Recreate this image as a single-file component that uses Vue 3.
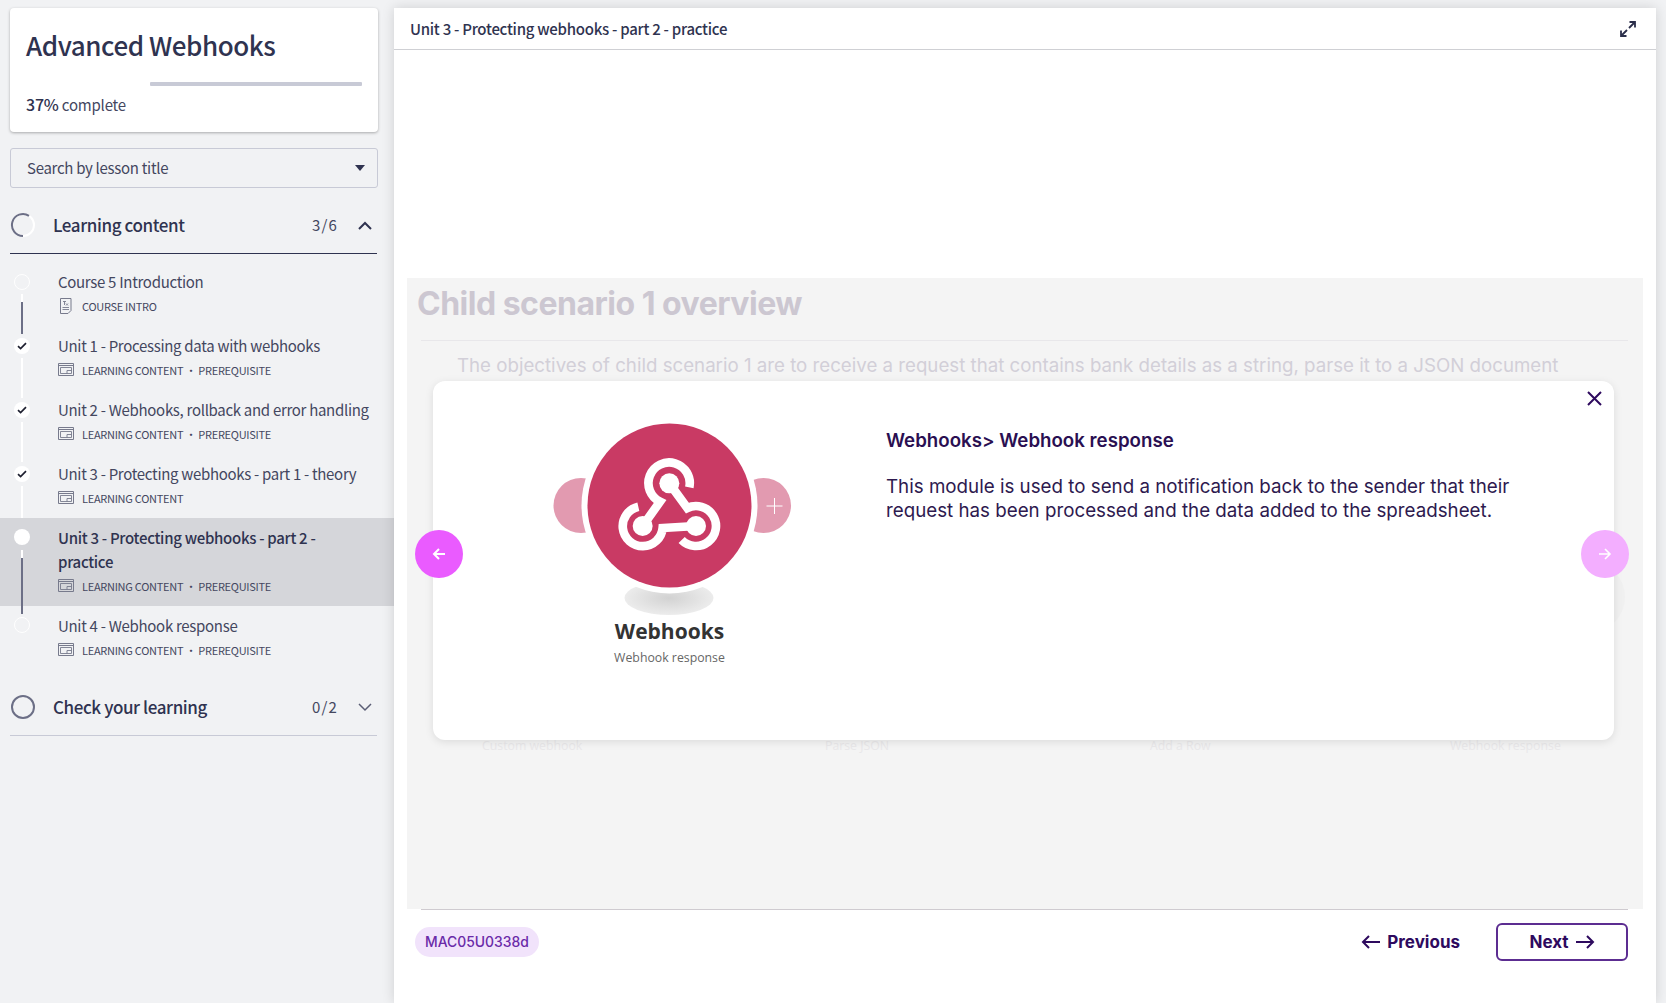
<template>
  <div class="page">
    <aside class="sidebar">
      <div class="course-card">
        <h1>Advanced Webhooks</h1>
        <div class="progress-track"></div>
        <p class="progress-text"><span>37%</span> complete</p>
      </div>

      <div class="search">
        <span>Search by lesson title</span>
        <i class="caret"></i>
      </div>

      <div class="section-head open">
        <svg class="ring" width="26" height="26" viewBox="0 0 26 26">
          <circle cx="13" cy="13" r="11" fill="none" stroke="#fff" stroke-width="2" />
          <path d="M19 3.8A11 11 0 1 0 13 24" fill="none" stroke="#6c6f86" stroke-width="2" />
        </svg>
        <span class="section-title">Learning content</span>
        <span class="count">3/6</span>
        <svg class="chev" width="14" height="9" viewBox="0 0 14 9"><path d="M1 8l6-6 6 6" fill="none" stroke="#2f3350" stroke-width="2" /></svg>
      </div>

      <ul class="lessons">
        <li
          v-for="lesson in lessons"
          :key="lesson.title"
          class="lesson"
          :class="{ active: lesson.active, last: lesson.last }"
        >
          <span class="dot" :class="{ hollow: lesson.hollow }">
            <svg v-if="lesson.done" width="10" height="8" viewBox="0 0 10 8"><path d="M1 4.2l2.6 2.4L9 1.2" fill="none" stroke="#1e2030" stroke-width="1.7" /></svg>
          </span>
          <span v-if="!lesson.last" class="line" :class="{ dark: lesson.dark }"></span>
          <div class="lesson-title">{{ lesson.title }}</div>
          <div class="lesson-meta">
            <svg v-if="lesson.intro" class="meta-icon" width="16" height="18" viewBox="0 0 16 18">
              <path d="M2.5 1.5h10.500v12l-3 3h-7.500z" fill="none" stroke="#777a8c" />
              <path d="M5 4.500h3M6.500 4.500v3.500M8 6.500l2 2M10 6.500l-2 2M4.500 10.500h6.500M4.500 12.500h6.500" fill="none" stroke="#777a8c" stroke-width=".9" />
            </svg>
            <svg v-else class="meta-icon" width="16" height="13" viewBox="0 0 16 13">
              <path d="M.5.500h15v12h-15zM.5 2.500h15" fill="none" stroke="#777a8c" />
              <path d="M2.500 4.500h11v6h-11zM9 10.500v-3h4.500" fill="none" stroke="#777a8c" stroke-width=".9" />
            </svg>
            <span>{{ lesson.kind }}</span>
          </div>
        </li>
      </ul>

      <div class="section-head">
        <svg class="ring" width="26" height="26" viewBox="0 0 26 26">
          <circle cx="13" cy="13" r="11" fill="none" stroke="#6c6f86" stroke-width="2" />
        </svg>
        <span class="section-title">Check your learning</span>
        <span class="count">0/2</span>
        <svg class="chev" width="14" height="9" viewBox="0 0 14 9"><path d="M1 1l6 6 6-6" fill="none" stroke="#5b5e75" stroke-width="1.500" /></svg>
      </div>
    </aside>

    <main class="panel">
      <header class="panel-head">
        <span>Unit 3 - Protecting webhooks - part 2 - practice</span>
        <svg width="16" height="16" viewBox="0 0 16 16">
          <path d="M9.500 1h5.500v5.500M15 1L9 7M6.500 15H1V9.500M1 15l6-6" fill="none" stroke="#2b2e4a" stroke-width="1.800" />
        </svg>
      </header>

      <section class="stage">
        <h2 class="ghost-title">Child scenario 1 overview</h2>
        <p class="ghost-text">The objectives of child scenario 1 are to receive a request that contains bank details as a string, parse it to a JSON document</p>
        <div class="ghost-labels">
          <span>Custom webhook</span>
          <span>Parse JSON</span>
          <span>Add a Row</span>
          <span>Webhook response</span>
        </div>
        <div class="ghost-circle"></div>

        <div class="modal">
          <div class="modal-figure">
            <svg width="280" height="205" viewBox="530 410 280 205">
              <defs>
                <radialGradient id="shade">
                  <stop offset="0" stop-color="#d2d2d2" />
                  <stop offset="1" stop-color="#ececec" />
                </radialGradient>
              </defs>
              <ellipse cx="669" cy="598" rx="44.500" ry="17" fill="url(#shade)" />
              <circle cx="581" cy="505.500" r="27.500" fill="#e29ab0" />
              <circle cx="763.500" cy="505.500" r="27.500" fill="#e29ab0" />
              <circle cx="669.500" cy="505.500" r="88" fill="#fff" />
              <circle cx="669.500" cy="505.500" r="82" fill="#c93a64" />
              <path d="M774.500 498v16M766.500 506h16" stroke="#fff" stroke-width="1" fill="none" />
              <g transform="translate(610 450) scale(.3333)" fill="none" stroke="#fff" stroke-width="26">
                <path d="M238 112A62 62 0 1 0 150 155L98 228" />
                <path d="M85 170A60 60 0 1 0 158 234L258 228" />
                <path d="M215 270A60 60 0 1 0 232 174L178 100" />
                <g fill="#fff" stroke="none">
                  <circle cx="178" cy="100" r="30" />
                  <circle cx="98" cy="228" r="30" />
                  <circle cx="258" cy="228" r="30" />
                </g>
              </g>
            </svg>
            <div class="figure-name">Webhooks</div>
            <div class="figure-sub">Webhook response</div>
          </div>
          <div class="modal-copy">
            <h3>Webhooks&gt; Webhook response</h3>
            <p>This module is used to send a notification back to the sender that their request has been processed and the data added to the spreadsheet.</p>
          </div>
          <svg class="close" width="15" height="15" viewBox="0 0 15 15">
            <path d="M1 1l13 13M14 1L1 14" stroke="#2e0a5e" stroke-width="2" fill="none" />
          </svg>
        </div>

        <button class="round prev">
          <svg width="14" height="12" viewBox="0 0 14 12"><path d="M13 6H2M7 1L2 6l5 5" fill="none" stroke="#fff" stroke-width="2" /></svg>
        </button>
        <button class="round next">
          <svg width="14" height="12" viewBox="0 0 14 12"><path d="M1 6h11M7 1l5 5-5 5" fill="none" stroke="#fff" stroke-width="1.600" /></svg>
        </button>
      </section>

      <footer class="panel-foot">
        <span class="chip">MAC05U0338d</span>
        <div class="nav">
          <a class="nav-link">
            <svg width="19" height="14" viewBox="0 0 19 14"><path d="M19 7H2M8 1L2 7l6 6" fill="none" stroke="#2e0a5e" stroke-width="2" /></svg>
            Previous
          </a>
          <a class="nav-link next-btn">
            Next
            <svg width="19" height="14" viewBox="0 0 19 14"><path d="M0 7h17M11 1l6 6-6 6" fill="none" stroke="#2e0a5e" stroke-width="2" /></svg>
          </a>
        </div>
      </footer>
    </main>
  </div>
</template>

<script setup>
const prereq = 'LEARNING CONTENT · PREREQUISITE'

const lessons = [
  { title: 'Course 5 Introduction', kind: 'COURSE INTRO', intro: true, hollow: true, dark: true },
  { title: 'Unit 1 - Processing data with webhooks', kind: prereq, done: true },
  { title: 'Unit 2 - Webhooks, rollback and error handling', kind: prereq, done: true },
  { title: 'Unit 3 - Protecting webhooks - part 1 - theory', kind: 'LEARNING CONTENT', done: true },
  { title: 'Unit 3 - Protecting webhooks - part 2 - practice', kind: prereq, active: true, dark: true },
  { title: 'Unit 4 - Webhook response', kind: prereq, hollow: true, last: true },
]
</script>

<style scoped>
.page {
  display: flex;
  height: 1003px;
  overflow: hidden;
  background: #f1f2f4;
  color: #2f3350;
  font-family: "Noto Sans CJK SC", "Noto Sans", sans-serif;
}

.sidebar {
  width: 394px;
  flex: none;
  padding-top: 8px;
  box-sizing: border-box;
}

.course-card {
  width: 368px;
  height: 124px;
  margin-left: 10px;
  padding: 21px 16px 0;
  box-sizing: border-box;
  background: #fff;
  border-radius: 4px;
  box-shadow: 0 1px 3px rgba(0, 0, 0, 0.3);
}

.course-card h1 {
  margin: 0;
  font-size: 26px;
  line-height: 32px;
  letter-spacing: -0.45px;
  font-weight: 500;
}

.progress-track {
  width: 212px;
  height: 4px;
  margin: 21px 0 0 124px;
  background: #c8cad6;
  border-radius: 1px;
}

.progress-text {
  margin: 6px 0 0;
  font-size: 15px;
  line-height: 24px;
  letter-spacing: -0.2px;
  color: #44475f;
}

.progress-text span {
  font-size: 16px;
  font-weight: 500;
  color: #2f3350;
}

.search {
  display: flex;
  align-items: center;
  justify-content: space-between;
  width: 368px;
  height: 40px;
  margin: 16px 0 0 10px;
  padding: 0 12px 2px 16px;
  box-sizing: border-box;
  border: 1px solid #c8cad6;
  border-radius: 3px;
  font-size: 15px;
  letter-spacing: -0.3px;
  color: #44475f;
}

.caret {
  width: 0;
  height: 0;
  margin-top: 2px;
  border-left: 5px solid transparent;
  border-right: 5px solid transparent;
  border-top: 6px solid #2f3350;
}

.section-head {
  display: flex;
  align-items: center;
  width: 367px;
  height: 57px;
  margin-left: 10px;
  margin-top: 9px;
  box-sizing: border-box;
  border-bottom: 1px solid #c8cad6;
}

.section-head.open {
  border-bottom-color: #2f3350;
}

.ring {
  flex: none;
  margin-right: 17px;
}

.section-title {
  flex: 1;
  padding-bottom: 2px;
  font-size: 17px;
  letter-spacing: -0.4px;
  font-weight: 500;
}

.count {
  width: 24px;
  margin-right: 22px;
  padding-bottom: 1px;
  font-size: 15px;
  letter-spacing: 1.2px;
  color: #44475f;
}

.chev {
  margin-right: 5px;
}

.lessons {
  list-style: none;
  margin: 8px 0 0;
  padding: 0;
}

.lesson {
  position: relative;
  padding: 9px 22px 10px 58px;
  color: #44475f;
}

.lesson.active {
  background: #d5d6da;
}

.lesson-title {
  margin-top: -1px;
  margin-bottom: 1px;
  font-size: 15px;
  letter-spacing: -0.3px;
  line-height: 24px;
}

.lesson.active .lesson-title {
  font-weight: 500;
  color: #2f3350;
}

.lesson-meta {
  display: flex;
  align-items: center;
  height: 21px;
  font-size: 11px;
  letter-spacing: -0.28px;
  color: #44475f;
}

.meta-icon {
  flex: none;
  margin-right: 8px;
}

.dot {
  position: absolute;
  left: 14px;
  top: 12px;
  display: flex;
  align-items: center;
  justify-content: center;
  width: 16px;
  height: 16px;
  box-sizing: border-box;
  border-radius: 50%;
  background: #fff;
}

.dot.hollow {
  background: transparent;
  border: 1px solid #fff;
}

.lesson.active .dot,
.lesson.last .dot {
  top: 11px;
}

.line {
  position: absolute;
  left: 21px;
  top: 32px;
  bottom: -8px;
  width: 2px;
  background: #fff;
}

.line.dark {
  background: linear-gradient(#fff 8px, #6c6f86 8px);
}

.panel {
  position: relative;
  z-index: 1;
  display: flex;
  flex-direction: column;
  width: 1262px;
  flex: none;
  margin-top: 8px;
  background: #fff;
  box-shadow: 0 0 12px rgba(0, 0, 0, 0.14);
}

.panel-head {
  display: flex;
  align-items: center;
  justify-content: space-between;
  height: 42px;
  flex: none;
  padding: 0 20px 0 16px;
  box-sizing: border-box;
  border-bottom: 1px solid #cfd0d4;
  font-size: 15px;
  letter-spacing: -0.27px;
  font-weight: 500;
}

.stage {
  position: relative;
  height: 631px;
  flex: none;
  margin: 228px 13px 0;
  background: #f4f4f4;
  font-family: Inter, sans-serif;
}

.ghost-title {
  height: 62px;
  margin: 0 15px 0 14px;
  border-bottom: 1px solid #e8e7ea;
  font-size: 32px;
  line-height: 51px;
  letter-spacing: -0.5px;
  text-indent: -4px;
  font-weight: 700;
  color: #ccc7d1;
}

.ghost-text {
  margin: 13px 0 0 50px;
  font-size: 18.700px;
  line-height: 24px;
  white-space: nowrap;
  color: #d2cfd8;
}

.ghost-labels {
  display: grid;
  grid-template-columns: 343px 325px 300px auto;
  margin: 359px 0 0 75px;
  font-family: "Open Sans", sans-serif;
  font-size: 12.300px;
  color: #e9e8ea;
}

.ghost-circle {
  position: absolute;
  left: 1148px;
  top: 284px;
  width: 70px;
  height: 70px;
  border-radius: 50%;
  background: #f0f0f0;
}

.modal {
  position: absolute;
  left: 26px;
  top: 103px;
  display: flex;
  width: 1181px;
  height: 359px;
  background: #fff;
  border-radius: 12px;
  box-shadow: 0 2px 8px rgba(0, 0, 0, 0.1);
}

.modal-figure {
  display: flex;
  flex-direction: column;
  align-items: center;
  width: 433px;
  flex: none;
  padding: 29px 0 0 20px;
  font-family: "Open Sans", sans-serif;
  text-align: center;
}

.figure-name {
  margin-top: 1px;
  font-size: 21px;
  line-height: 30px;
  font-weight: 700;
  color: #333;
}

.figure-sub {
  margin-top: 3px;
  font-size: 12.300px;
  line-height: 18px;
  color: #666;
}

.modal-copy {
  padding-top: 47px;
  width: 630px;
  color: #2e1a4f;
}

.modal-copy h3 {
  margin: 0;
  font-size: 18.700px;
  line-height: 26px;
  font-weight: 600;
  color: #2a0f52;
}

.modal-copy p {
  margin: 21px 0 0;
  font-size: 18.750px;
  line-height: 24px;
}

.close {
  position: absolute;
  right: 12px;
  top: 10px;
}

.round {
  position: absolute;
  top: 252px;
  display: flex;
  align-items: center;
  justify-content: center;
  width: 48px;
  height: 48px;
  padding: 0;
  border: none;
  border-radius: 50%;
}

.round.prev {
  left: 8px;
  background: #ea5bff;
}

.round.next {
  right: 14px;
  background: #f3aeff;
}

.panel-foot {
  display: flex;
  align-items: center;
  justify-content: space-between;
  margin: 0 28px 0 27px;
  padding-top: 13px;
  border-top: 1px solid #cfcbd0;
  font-family: Inter, sans-serif;
}

.chip {
  margin-left: -6px;
  padding: 0 10px;
  height: 30px;
  line-height: 30px;
  border-radius: 15px;
  background: #f1e3fb;
  color: #6a2aa8;
  font-size: 13.900px;
  font-weight: 500;
}

.nav {
  display: flex;
  align-items: center;
  gap: 36px;
}

.nav-link {
  display: flex;
  align-items: center;
  gap: 7px;
  font-size: 17px;
  font-weight: 700;
  color: #2e0a5e;
}

.next-btn {
  justify-content: center;
  width: 132px;
  height: 38px;
  box-sizing: border-box;
  border: 2px solid #5c2d91;
  border-radius: 6px;
}
</style>

<style>
body {
  background: #f1f2f4;
}
</style>
